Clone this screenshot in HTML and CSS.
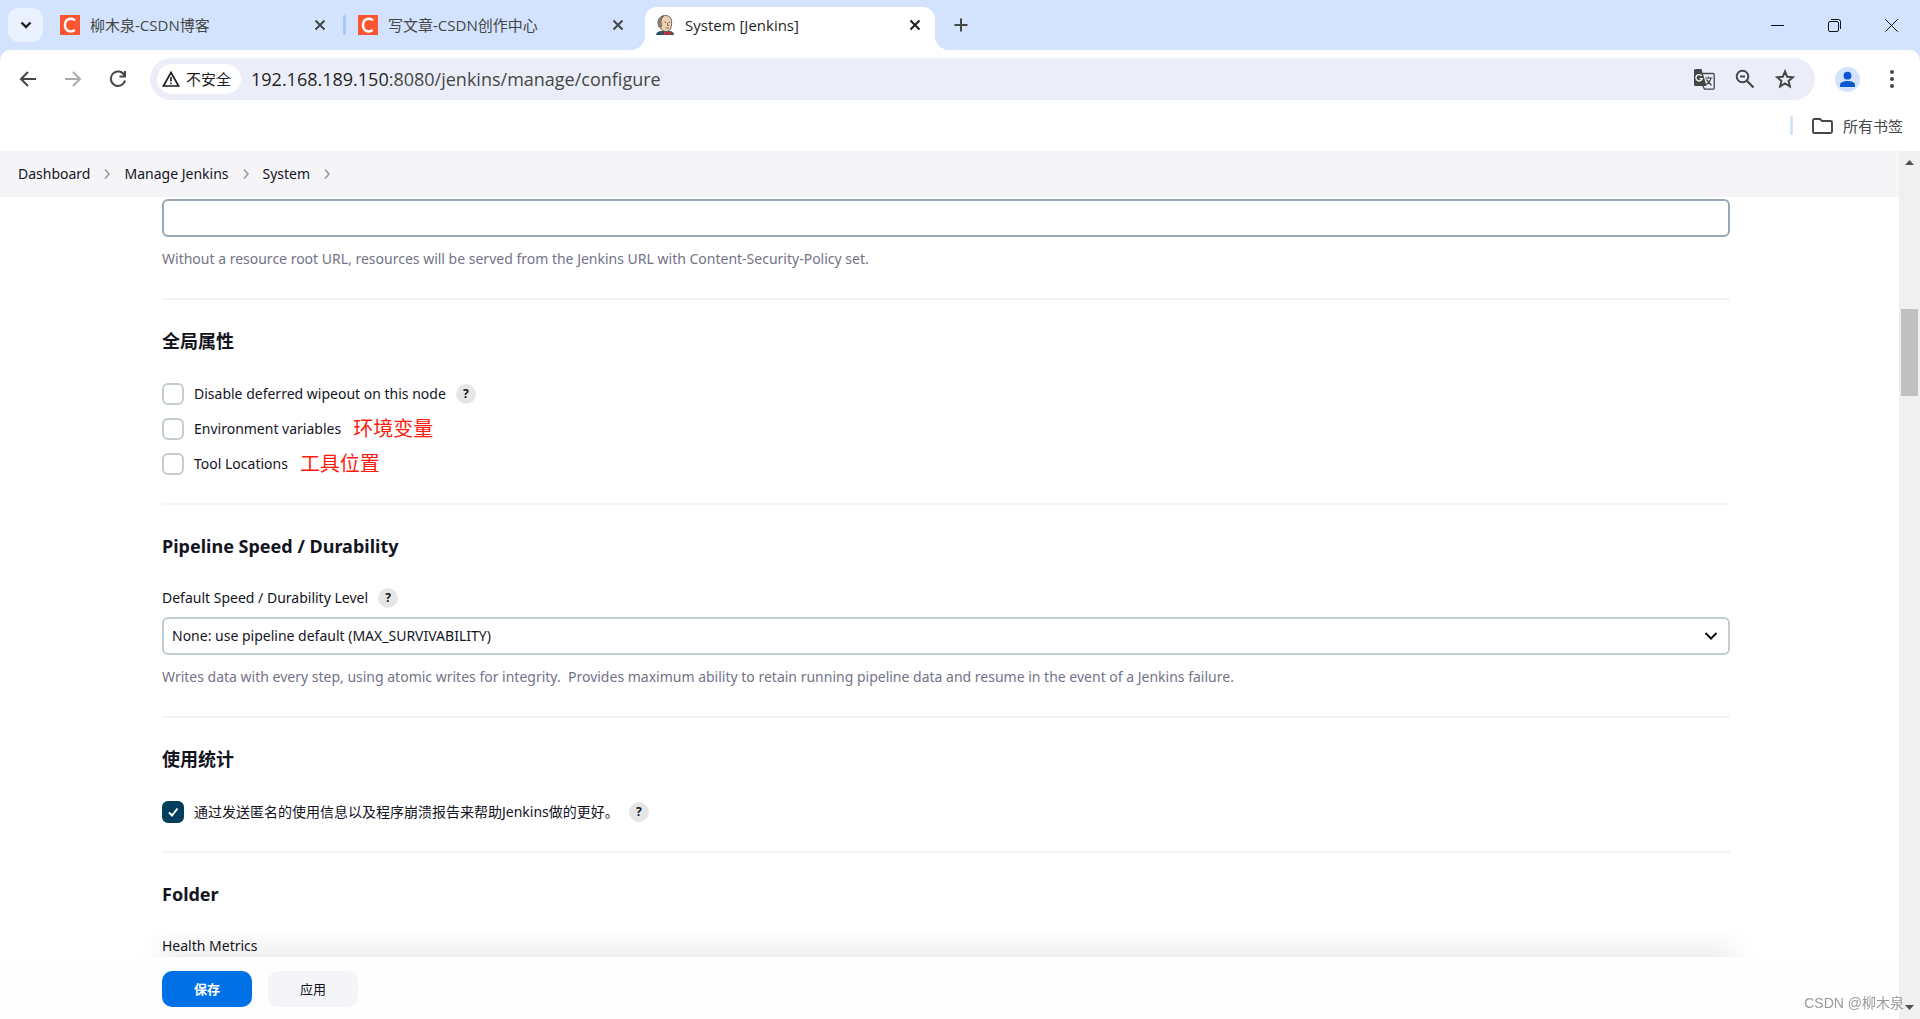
FILE: index.html
```html
<!DOCTYPE html>
<html lang="zh-CN">
<head>
<meta charset="utf-8">
<title>System [Jenkins]</title>
<link rel="stylesheet" href="styles.css">
</head>
<body>
<header class="browser">
  <div class="tabstrip">
    <button class="tab-search" aria-label="搜索标签页"><svg width="12" height="8" viewBox="0 0 12 8"><path d="M1.500 1.500L6 6L10.500 1.500" fill="none" stroke="#1f1f1f" stroke-width="2.400"/></svg></button>
    <div class="tab">
      <span class="favicon-c"><svg width="20" height="20" viewBox="0 0 20 20"><path d="M15 5.300C12 2.600 5.500 3.200 5 9.500C4.600 16 10.500 18 14.800 15" fill="none" stroke="#fff" stroke-width="2.400"/></svg></span>
      <span class="tab-title">柳木泉-CSDN博客</span>
      <button class="tab-close" aria-label="关闭"><svg width="12" height="12" viewBox="0 0 12 12"><path d="M1.500 1.500L10.500 10.500M10.500 1.500L1.500 10.500"/></svg></button>
    </div>
    <span class="tab-divider"></span>
    <div class="tab">
      <span class="favicon-c"><svg width="20" height="20" viewBox="0 0 20 20"><path d="M15 5.300C12 2.600 5.500 3.200 5 9.500C4.600 16 10.500 18 14.800 15" fill="none" stroke="#fff" stroke-width="2.400"/></svg></span>
      <span class="tab-title">写文章-CSDN创作中心</span>
      <button class="tab-close" aria-label="关闭"><svg width="12" height="12" viewBox="0 0 12 12"><path d="M1.500 1.500L10.500 10.500M10.500 1.500L1.500 10.500"/></svg></button>
    </div>
    <div class="tab tab-active">
      <svg class="favicon" width="20" height="20" viewBox="0 0 20 20"><path d="M1 20C1 17.500 3 16.500 6 16L15 16C17.500 16.500 19 17.500 19 20Z" fill="#2f5468"/><path d="M4 7C4 3 7 .5 10.500 .5C15 .5 17 4 16.600 8.500C16.600 12.500 15 16.500 11.500 16.500C8 16.500 5.500 14 5 12Z" fill="#efd0b0" stroke="#4b4540" stroke-width=".8"/><path d="M3.500 11.500C1.800 6 3.500 1.500 9 .8C6.500 2.500 6.500 5 6 7.500C7 8.500 6.700 11 6 12.500Z" fill="#8b8580" stroke="#4b4540" stroke-width=".6"/><path d="M9.500 7.300h1.700M13.300 7.300h1.700M12.500 8v2.500h1.500M10.500 12.700c1.300 .6 2.400 .5 3.500 0" fill="none" stroke="#67483b" stroke-width=".8"/><path d="M9 16.500l3.500 1.300 3.500-1.300v3.300l-3.500-1L9 20z" fill="#e52822"/></svg>
      <span class="tab-title">System [Jenkins]</span>
      <button class="tab-close" aria-label="关闭"><svg width="12" height="12" viewBox="0 0 12 12"><path d="M1.500 1.500L10.500 10.500M10.500 1.500L1.500 10.500"/></svg></button>
    </div>
    <button class="new-tab" aria-label="新标签页"><svg width="14" height="14" viewBox="0 0 14 14"><path d="M7 .5V13.500M.5 7H13.500" stroke="#444746" stroke-width="2"/></svg></button>
    <div class="window-controls">
      <button aria-label="最小化"><svg width="13" height="13" viewBox="0 0 13 13"><path d="M0 6.500H13"/></svg></button>
      <button aria-label="还原"><svg width="13" height="13" viewBox="0 0 13 13"><rect x=".5" y="2.500" width="10" height="10" rx="1.500"/><path d="M3 .5H10.500Q12.500 .5 12.500 2.500V10"/></svg></button>
      <button aria-label="关闭窗口"><svg width="13" height="13" viewBox="0 0 13 13"><path d="M.3 .3L12.700 12.700M12.700 .3L.3 12.700"/></svg></button>
    </div>
  </div>
  <div class="toolbar">
    <nav class="nav-buttons">
      <button aria-label="后退"><svg width="18" height="18" viewBox="0 0 18 18"><path d="M17 9H2.500M9 2L2 9L9 16" fill="none" stroke="#444746" stroke-width="2"/></svg></button>
      <button aria-label="前进"><svg width="18" height="18" viewBox="0 0 18 18"><path d="M1 9H15.500M9 2L16 9L9 16" fill="none" stroke="#a9abab" stroke-width="2"/></svg></button>
      <button aria-label="刷新"><svg width="18" height="18" viewBox="0 0 18 18"><path d="M15.500 5.500A7.200 7.200 0 1 0 16 10.500" fill="none" stroke="#444746" stroke-width="2"/><path d="M17 1V7.500H10.500V5.500H15V1Z" fill="#444746"/></svg></button>
    </nav>
    <div class="omnibox">
      <button class="site-chip"><svg width="18" height="16" viewBox="0 0 18 16"><path d="M9 1.500L16.600 15H1.400Z" fill="none" stroke="#1f1f1f" stroke-width="1.700"/><path d="M9 6V10.500M9 11.700V13.300" stroke="#1f1f1f" stroke-width="1.600"/></svg><span>不安全</span></button>
      <div class="url"><span class="host">192.168.189.150</span>:8080/jenkins/manage/configure</div>
      <div class="omni-actions">
        <button aria-label="翻译"><svg width="21" height="21" viewBox="0 0 21 21"><path d="M9 4.500H19a1.200 1.200 0 0 1 1.200 1.200V19a1.200 1.200 0 0 1-1.200 1.200H10.500L8.500 16" fill="none" stroke="#444746" stroke-width="1.300"/><path d="M1.500 0H7.500L12.500 17H1.500A1.500 1.500 0 0 1 0 15.500V1.500A1.500 1.500 0 0 1 1.500 0Z" fill="#444746"/><path d="M7.600 6.800A3.200 3.200 0 1 0 8.200 9.600H5.500" fill="none" stroke="#fff" stroke-width="1.300"/><path d="M11 9H18.500M14.500 7.500V9M17 9C16 12.500 14 14.500 12 15.500M12.500 10.500L17.500 16.500" fill="none" stroke="#444746" stroke-width="1.200"/></svg></button>
        <button aria-label="缩放"><svg width="20" height="20" viewBox="0 0 20 20"><circle cx="7.500" cy="7.500" r="5.800" fill="none" stroke="#444746" stroke-width="2"/><path d="M11.800 11.800L18.500 18.500M5 7.500H10" stroke="#444746" stroke-width="2.200"/></svg></button>
        <button aria-label="收藏"><svg width="20" height="20" viewBox="0 0 20 20"><path d="M10 2.500L12.200 7.700L17.900 8.200L13.600 11.900L14.900 17.500L10 14.500L5.100 17.500L6.400 11.900L2.100 8.200L7.800 7.700Z" fill="none" stroke="#444746" stroke-width="2"/></svg></button>
      </div>
    </div>
    <button class="profile" aria-label="个人资料"><svg width="25" height="25" viewBox="0 0 25 25"><circle cx="12.500" cy="12.500" r="12.500" fill="#d3e3fd"/><circle cx="12.500" cy="8.700" r="3.900" fill="#0b57d0"/><path d="M5 20V18C5 15 9 14 12.500 14S20 15 20 18V20Z" fill="#0b57d0"/></svg></button>
    <button class="menu" aria-label="菜单"><svg width="4" height="18" viewBox="0 0 4 18"><g fill="#444746"><circle cx="2" cy="2" r="2"/><circle cx="2" cy="9" r="2"/><circle cx="2" cy="16" r="2"/></g></svg></button>
  </div>
  <div class="bookmarks">
    <span class="bookmark-divider"></span>
    <button><svg width="21" height="16" viewBox="0 0 21 16"><path d="M1 2.500Q1 1 2.500 1H8L10 3H18.500Q20 3 20 4.500V13.500Q20 15 18.500 15H2.500Q1 15 1 13.500Z" fill="none" stroke="#444746" stroke-width="1.900"/></svg>所有书签</button>
  </div>
</header>
<div class="viewport">
  <div class="page">
    <nav class="breadcrumbs">
      <a href="#">Dashboard</a><svg width="6" height="10" viewBox="0 0 6 10"><path d="M1 .5L5 5L1 9.500"/></svg>
      <a href="#">Manage Jenkins</a><svg width="6" height="10" viewBox="0 0 6 10"><path d="M1 .5L5 5L1 9.500"/></svg>
      <a href="#">System</a><svg width="6" height="10" viewBox="0 0 6 10"><path d="M1 .5L5 5L1 9.500"/></svg>
    </nav>
    <main class="form">
      <section>
        <input class="field" type="text" aria-label="Resource Root URL">
        <p class="help-text">Without a resource root URL, resources will be served from the Jenkins URL with Content-Security-Policy set.</p>
      </section>
      <section>
        <h2>全局属性</h2>
        <div class="checks">
          <div class="check-row"><input type="checkbox" id="wipeout"><label for="wipeout">Disable deferred wipeout on this node</label><button class="help">?</button></div>
          <div class="check-row"><input type="checkbox" id="env"><label for="env">Environment variables</label><span class="note">环境变量</span></div>
          <div class="check-row"><input type="checkbox" id="tools"><label for="tools">Tool Locations</label><span class="note">工具位置</span></div>
        </div>
      </section>
      <section>
        <h2>Pipeline Speed / Durability</h2>
        <div class="label-row"><label for="durability">Default Speed / Durability Level</label><button class="help">?</button></div>
        <div class="select-wrap">
          <select class="field" id="durability"><option>None: use pipeline default (MAX_SURVIVABILITY)</option></select>
          <svg class="select-arrow" width="12" height="8" viewBox="0 0 12 8"><path d="M.5 1L6 6.500L11.500 1" fill="none" stroke="#14141f" stroke-width="2"/></svg>
        </div>
        <p class="help-text">Writes data with every step, using atomic writes for integrity.&nbsp; Provides maximum ability to retain running pipeline data and resume in the event of a Jenkins failure.</p>
      </section>
      <section>
        <h2>使用统计</h2>
        <div class="checks">
          <div class="check-row"><input type="checkbox" id="stats" checked><label for="stats">通过发送匿名的使用信息以及程序崩溃报告来帮助Jenkins做的更好。</label><button class="help">?</button></div>
        </div>
      </section>
      <section>
        <h2>Folder</h2>
        <div class="label-row">Health Metrics</div>
      </section>
    </main>
    <footer class="actions">
      <button class="btn btn-primary">保存</button>
      <button class="btn">应用</button>
    </footer>
  </div>
  <div class="scrollbar"><svg width="9" height="5" viewBox="0 0 9 5"><path d="M0 5L4.500 0L9 5Z"/></svg><span class="thumb"></span><svg class="down" width="9" height="5" viewBox="0 0 9 5"><path d="M0 0L4.500 5L9 0Z"/></svg></div>
</div>
<span class="watermark">CSDN @柳木泉</span>
</body>
</html>
```
FILE: styles.css
```css
* { box-sizing: border-box; }
body {
  margin: 0;
  height: 100vh;
  display: flex;
  flex-direction: column;
  overflow: hidden;
  background: #fff;
  color: #14141f;
  font: 14px/20px "Noto Sans", "Noto Sans CJK SC", sans-serif;
}
button { border: 0; padding: 0; background: none; font: inherit; color: inherit; display: flex; align-items: center; justify-content: center; }
svg { display: block; flex: none; }

/* Browser chrome */
.browser { font-family: "Open Sans", "Noto Sans CJK SC", sans-serif; background: #d3e3fd; }
.tabstrip { display: flex; align-items: center; height: 50px; padding-left: 8px; color: #444746; }
.tab-search { width: 35px; height: 34px; border-radius: 11px; background: #e9f1fe; margin-right: 7px; }
.tab { display: flex; align-items: center; width: 290px; height: 43px; padding: 0 14px 0 10px; gap: 10px; }
.tab-title { flex: 1; font-size: 15px; white-space: nowrap; }
.favicon-c { width: 20px; height: 20px; background: #fc5531; }
.tab-close svg { stroke: #444746; stroke-width: 2; }
.tab-divider { width: 3px; height: 20px; margin: 0 2px 0 3px; border-radius: 2px; background: #a8c7fa; }
.tab-active { position: relative; align-self: flex-end; margin-left: 7px; padding-bottom: 7px; background: #fff; border-radius: 12px 12px 0 0; color: #1f1f1f; }
.tab-active .tab-close svg { stroke: #1f1f1f; }
.tab-active::before, .tab-active::after { content: ""; position: absolute; bottom: 0; width: 14px; height: 14px; }
.tab-active::before { right: 100%; background: radial-gradient(circle at 0 0, transparent 14px, #fff 14px); }
.tab-active::after { left: 100%; background: radial-gradient(circle at 100% 0, transparent 14px, #fff 14px); }
.new-tab { margin-left: 19px; }
.window-controls { display: flex; margin-left: auto; }
.window-controls button { width: 57px; height: 40px; }
.window-controls svg { fill: none; stroke: #111; stroke-width: 1; }
.toolbar { display: flex; align-items: center; height: 58px; padding: 0 26px 0 19px; background: #fff; border-radius: 10px 10px 0 0; }
.nav-buttons { display: flex; gap: 27px; margin-right: 23px; }
.omnibox { flex: 1; display: flex; align-items: center; height: 42px; padding: 0 20px 0 7px; border-radius: 21px; background: #ebeef8; }
.site-chip { height: 30px; padding: 0 10px 0 5px; gap: 6px; border-radius: 15px; background: #fff; font-size: 15px; color: #1f1f1f; }
.url { margin-left: 10px; font-size: 18px; color: #444746; }
.host { color: #1f1f1f; }
.omni-actions { display: flex; gap: 20px; margin-left: auto; }
.profile { margin: 0 30px 0 20px; }
.bookmarks { display: flex; justify-content: flex-end; align-items: center; gap: 19px; height: 43px; padding: 0 17px 8px 0; background: #fff; font-size: 15px; color: #444746; }
.bookmarks button { gap: 10px; }
.bookmark-divider { width: 3px; height: 19px; border-radius: 2px; background: #d3e3fd; }

/* Jenkins page */
.viewport { flex: 1; min-height: 0; display: flex; }
.page { flex: 1; min-width: 0; display: flex; flex-direction: column; }
.breadcrumbs { display: flex; align-items: center; gap: 14px; height: 46px; padding-left: 18px; background: #f5f5f8; }
.breadcrumbs a { color: inherit; text-decoration: none; }
.breadcrumbs svg { fill: none; stroke: #9595aa; stroke-width: 1.500; }
.form { flex: 1; min-height: 0; overflow: hidden; padding: 2px 169px 0 162px; }
section { padding-bottom: 28px; }
section + section { border-top: 2px solid #f3f3f8; padding-top: 28px; }
.field { display: block; width: 100%; height: 38px; padding: 0 8px; border: 2px solid #c3ccd1; border-radius: 6px; background: #fff; font: inherit; color: inherit; }
input.field { border-color: #98a7b3; }
select { appearance: none; }
.select-wrap { position: relative; }
.select-arrow { position: absolute; right: 13px; top: 15px; }
.help-text { margin: 11px 0 0; color: #737389; line-height: 22px; }
h2 { margin: 0 0 28px; font-size: 18px; line-height: 27px; font-weight: 700; }
.checks { display: grid; gap: 13px; }
.check-row { display: flex; align-items: center; height: 22px; }
.check-row input { appearance: none; width: 22px; height: 22px; margin: 0 10px 0 0; border: 2px solid #c3ccd1; border-radius: 6px; background: #fff; }
.check-row input:checked { border-color: #003e5c; background: #003e5c url("data:image/svg+xml,%3Csvg xmlns='http://www.w3.org/2000/svg' viewBox='0 0 18 18'%3E%3Cpath d='M5 9.500L8 12.500L13.500 5.500' fill='none' stroke='white' stroke-width='2'/%3E%3C/svg%3E") center / 18px; }
.help { width: 20px; height: 20px; margin-left: 10px; border-radius: 50%; background: #e6e6e6; font-size: 12px; font-weight: 700; }
.note { margin-left: 12px; color: #fe1b0d; font-size: 20px; }
.label-row { display: flex; align-items: center; height: 20px; margin-bottom: 9px; }
.actions { position: relative; display: flex; gap: 16px; height: 62px; padding: 14px 169px 0 162px; background: #fefefe; }
.actions::before { content: ""; position: absolute; left: 140px; right: 144px; bottom: 100%; height: 28px; background: linear-gradient(transparent, rgba(0, 0, 0, .06)); mask-image: linear-gradient(90deg, transparent, #000 40px, #000 calc(100% - 40px), transparent); }
.btn { width: 90px; height: 36px; border-radius: 10px; background: #f4f4f9; font-size: 13px; }
.btn-primary { background: #0070e6; color: #fff; font-weight: 700; }
.scrollbar { display: flex; flex-direction: column; align-items: center; width: 21px; padding: 9px 0; background: #f0f0f0; }
.scrollbar svg { fill: #505050; }
.thumb { width: 17px; height: 87px; margin-top: 144px; background: #c0c0c0; }
.down { margin-top: auto; }
.watermark { position: fixed; right: 16px; bottom: 6px; font: 14px/20px "Liberation Sans", "Noto Sans CJK SC", sans-serif; color: #999; }
```
